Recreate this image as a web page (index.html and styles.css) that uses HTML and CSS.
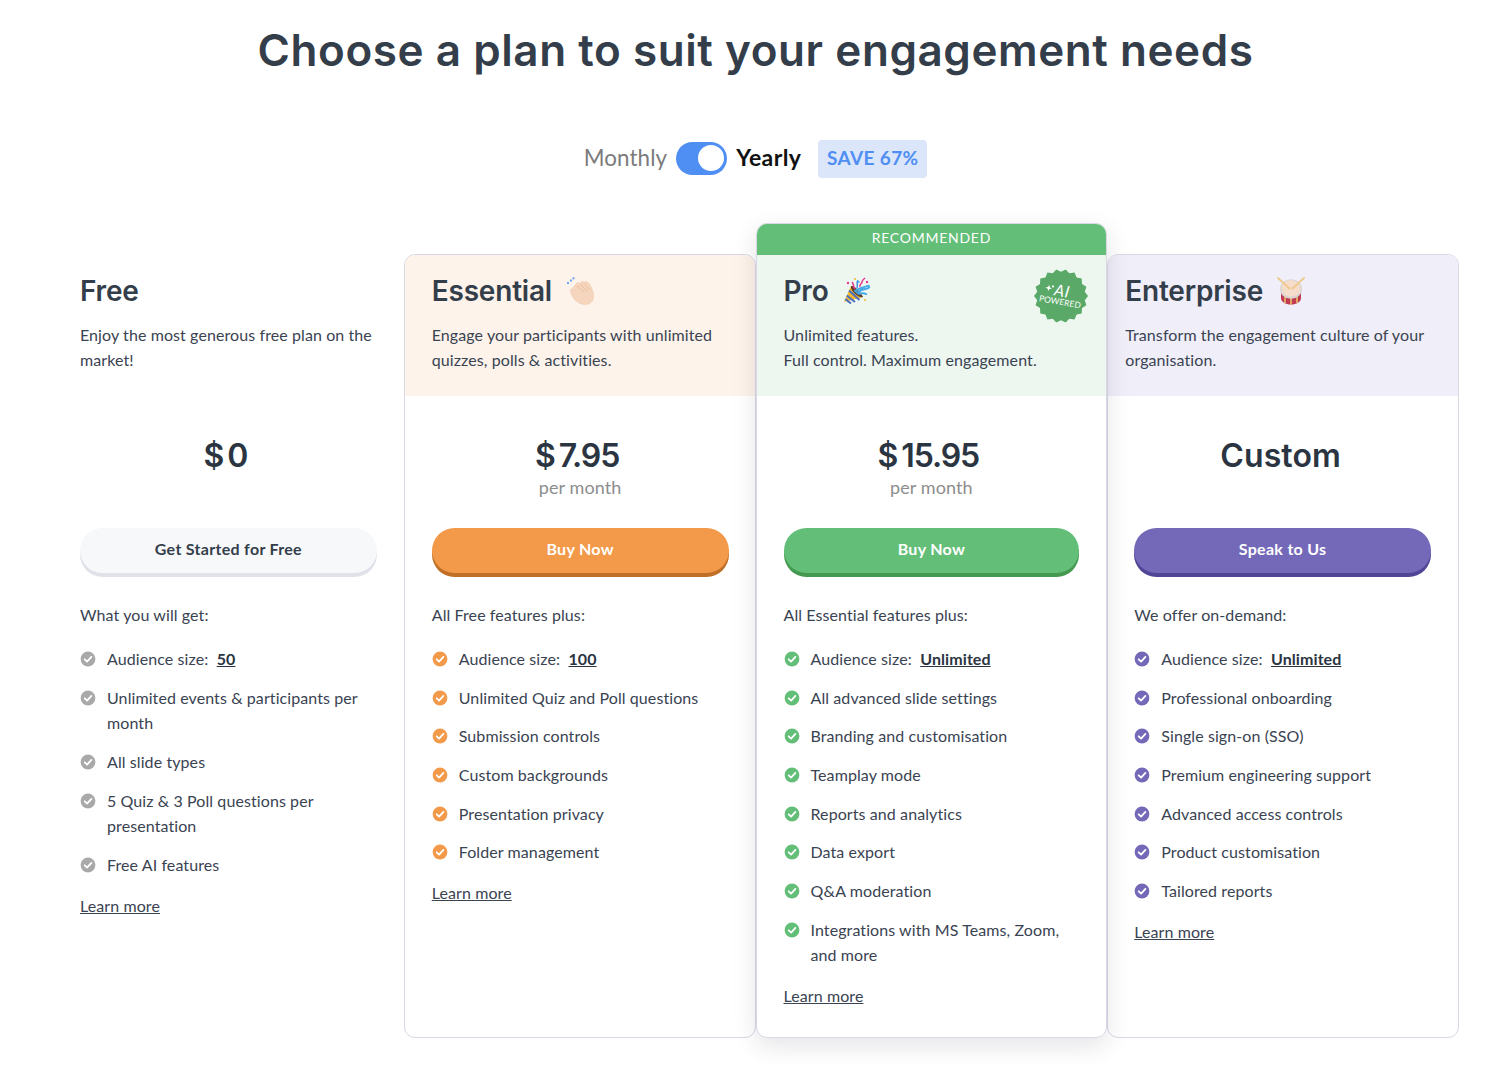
FILE: index.html
```html
<!DOCTYPE html>
<html lang="en">
<head>
<meta charset="utf-8">
<title>Pricing</title>
<link rel="stylesheet" href="styles.css">
</head>
<body>
<svg class="defs" width="0" height="0" aria-hidden="true">
  <symbol id="chk" viewBox="0 0 16 16">
    <circle cx="8" cy="8" r="7.4" fill="currentColor"/>
    <path d="M4.7 8.3 7.1 10.6 11.4 5.9" fill="none" stroke="#fff" stroke-width="1.8" stroke-linecap="round" stroke-linejoin="round"/>
  </symbol>
</svg>
<main class="page">
  <h1 class="title">Choose a plan to suit your engagement needs</h1>
  <div class="billing">
    <span class="billing-off">Monthly</span>
    <span class="switch"><span class="knob"></span></span>
    <span class="billing-on">Yearly</span>
    <span class="save">SAVE 67%</span>
  </div>
  <section class="plans">
    <article class="plan plan-free">
      <header class="plan-head">
        <h2 class="plan-name">Free</h2>
        <p class="plan-desc">Enjoy the most generous free plan on the market!</p>
      </header>
      <div class="plan-body">
        <div class="price-box"><div class="price price-num"><span class="cur">$</span>0</div></div>
        <a class="btn">Get Started for Free</a>
        <p class="lead">What you will get:</p>
        <ul class="features">
          <li><svg class="tick"><use href="#chk"/></svg><span>Audience size:&nbsp; <b>50</b></span></li>
          <li><svg class="tick"><use href="#chk"/></svg><span>Unlimited events &amp; participants per month</span></li>
          <li><svg class="tick"><use href="#chk"/></svg><span>All slide types</span></li>
          <li><svg class="tick"><use href="#chk"/></svg><span>5 Quiz &amp; 3 Poll questions per presentation</span></li>
          <li><svg class="tick"><use href="#chk"/></svg><span>Free AI features</span></li>
        </ul>
        <a class="more">Learn more</a>
      </div>
    </article>

    <article class="plan plan-essential">
      <header class="plan-head">
        <h2 class="plan-name">Essential
          <svg class="emoji" viewBox="0 0 28 28">
            <g fill="#f5d5bd" stroke="#eec4a6" stroke-width=".5">
              <path d="M5 13 11 6c1-1 3 0 2.400 1.500L15 5c1-1.500 3-.5 2.700 1L19 4.800c1.300-1 3 0 2.600 1.500 1.500-.5 2.600.5 2.500 2 2 3 3.900 8 3.500 12-.4 4.500-4 7.200-8.500 7.200-3.600 0-6.500-1.500-9-3.500-2.600-2.500-5-6.500-5.500-9.500-.4-1.300.3-2 .4-2.500z"/>
              <path d="M11 9 18 15M14.500 7.500 21 14M18 6.500 23.500 13" fill="none" stroke="#e9bd9c" stroke-width=".9"/>
            </g>
            <g fill="#6aa5ef"><rect x="1" y="5" width="2" height="2"/><rect x="4" y="2.500" width="2" height="2"/><rect x="6.500" y=".3" width="2" height="2"/></g>
          </svg>
        </h2>
        <p class="plan-desc">Engage your participants with unlimited quizzes, polls &amp; activities.</p>
      </header>
      <div class="plan-body">
        <div class="price-box"><div class="price price-num"><span class="cur">$</span>7.95</div><div class="per">per month</div></div>
        <a class="btn">Buy Now</a>
        <p class="lead">All Free features plus:</p>
        <ul class="features">
          <li><svg class="tick"><use href="#chk"/></svg><span>Audience size:&nbsp; <b>100</b></span></li>
          <li><svg class="tick"><use href="#chk"/></svg><span>Unlimited Quiz and Poll questions</span></li>
          <li><svg class="tick"><use href="#chk"/></svg><span>Submission controls</span></li>
          <li><svg class="tick"><use href="#chk"/></svg><span>Custom backgrounds</span></li>
          <li><svg class="tick"><use href="#chk"/></svg><span>Presentation privacy</span></li>
          <li><svg class="tick"><use href="#chk"/></svg><span>Folder management</span></li>
        </ul>
        <a class="more">Learn more</a>
      </div>
    </article>

    <article class="plan plan-pro">
      <div class="banner">RECOMMENDED</div>
      <header class="plan-head">
        <h2 class="plan-name">Pro
          <svg class="emoji" viewBox="0 0 28 28">
            <path d="M1 25 8 9 20 20z" fill="#f2b632"/>
            <path d="M3.800 18.500 12 25M2.300 22 8 26.500M6 13.500 16.500 23" stroke="#4a6fc0" stroke-width="2.100" fill="none"/>
            <path d="M8 9c3-1 9 5 12 11-4 1.500-13-6-12-11z" fill="#5d3d28"/>
            <path d="M12 14c3-3 8-3 12-5 2-1 3 1 1.500 2-4 1.500-8 1-11 5zM15 17c3-1 6-1 9 .5" fill="none" stroke="#45a9e8" stroke-width="1.900"/>
            <path d="M12 12c-2-2-1-5-3-7M17 10c-1-3 2-3 2-5s2-3 3-4" fill="none" stroke="#e5398f" stroke-width="1.500"/>
            <path d="M14 11c1-3-.5-5 .5-7l2 1.500" fill="none" stroke="#3f8fe0" stroke-width="1.500"/>
            <circle cx="5" cy="6" r="1.200" fill="#e5398f"/><circle cx="12" cy="2" r="1" fill="#f2b632"/><circle cx="24" cy="5" r="1.200" fill="#e5398f"/><circle cx="22" cy="23" r="1" fill="#f2b632"/>
          </svg>
        </h2>
        <p class="plan-desc">Unlimited features.<br>Full control. Maximum engagement.</p>
        <svg class="ai-badge" viewBox="-28 -28 56 56" role="img" aria-label="AI powered">
          <polygon fill="#5aa968" points="27,0 23.800,4.200 25.400,9.200 21,12.100 20.700,17.400 15.600,18.500 13.500,23.400 8.300,22.700 4.700,26.600 0,24.200 -4.700,26.600 -8.300,22.700 -13.500,23.400 -15.600,18.500 -20.700,17.400 -21,12.100 -25.400,9.200 -23.800,4.200 -27,0 -23.800,-4.200 -25.400,-9.200 -21,-12.100 -20.700,-17.400 -15.600,-18.500 -13.500,-23.400 -8.300,-22.700 -4.700,-26.600 0,-24.200 4.700,-26.600 8.300,-22.700 13.500,-23.400 15.600,-18.500 20.700,-17.400 21,-12.100 25.400,-9.200 23.800,-4.200"/>
          <g transform="rotate(10)" fill="#fff">
            <path d="M-13.500 -9-12.600-6.700-10.300-5.800-12.600-4.900-13.500-2.600-14.400-4.900-16.700-5.800-14.400-6.700z"/>
            <circle cx="-9.500" cy="-8" r="1.100"/>
            <text class="ai-big" x="-7.500" y="0.500">AI</text>
            <text class="ai-small" x="0" y="8.800" text-anchor="middle">POWERED</text>
          </g>
        </svg>
      </header>
      <div class="plan-body">
        <div class="price-box"><div class="price price-num"><span class="cur">$</span>15.95</div><div class="per">per month</div></div>
        <a class="btn">Buy Now</a>
        <p class="lead">All Essential features plus:</p>
        <ul class="features">
          <li><svg class="tick"><use href="#chk"/></svg><span>Audience size:&nbsp; <b>Unlimited</b></span></li>
          <li><svg class="tick"><use href="#chk"/></svg><span>All advanced slide settings</span></li>
          <li><svg class="tick"><use href="#chk"/></svg><span>Branding and customisation</span></li>
          <li><svg class="tick"><use href="#chk"/></svg><span>Teamplay mode</span></li>
          <li><svg class="tick"><use href="#chk"/></svg><span>Reports and analytics</span></li>
          <li><svg class="tick"><use href="#chk"/></svg><span>Data export</span></li>
          <li><svg class="tick"><use href="#chk"/></svg><span>Q&amp;A moderation</span></li>
          <li><svg class="tick"><use href="#chk"/></svg><span>Integrations with MS Teams, Zoom, and more</span></li>
        </ul>
        <a class="more">Learn more</a>
      </div>
    </article>

    <article class="plan plan-enterprise">
      <header class="plan-head">
        <h2 class="plan-name">Enterprise
          <svg class="emoji" viewBox="0 0 28 28">
            <path d="M4 12v9c0 4 4.500 6.500 10 6.500s10-2.500 10-6.500v-9z" fill="#c23a52"/>
            <path d="M8 19v7M14 21v6.500M20 19v7" stroke="#e8c06a" stroke-width="1.600"/>
            <ellipse cx="14" cy="12" rx="11" ry="9.800" fill="#d8d4d2"/>
            <ellipse cx="14" cy="11.500" rx="9.600" ry="8.200" fill="#f6dccb"/>
            <path d="M1 1 12.500 11.500M27 1 15.500 11.500" stroke="#eec98a" stroke-width="1.800" stroke-linecap="round"/>
          </svg>
        </h2>
        <p class="plan-desc">Transform the engagement culture of your organisation.</p>
      </header>
      <div class="plan-body">
        <div class="price-box"><div class="price">Custom</div></div>
        <a class="btn">Speak to Us</a>
        <p class="lead">We offer on-demand:</p>
        <ul class="features">
          <li><svg class="tick"><use href="#chk"/></svg><span>Audience size:&nbsp; <b>Unlimited</b></span></li>
          <li><svg class="tick"><use href="#chk"/></svg><span>Professional onboarding</span></li>
          <li><svg class="tick"><use href="#chk"/></svg><span>Single sign-on (SSO)</span></li>
          <li><svg class="tick"><use href="#chk"/></svg><span>Premium engineering support</span></li>
          <li><svg class="tick"><use href="#chk"/></svg><span>Advanced access controls</span></li>
          <li><svg class="tick"><use href="#chk"/></svg><span>Product customisation</span></li>
          <li><svg class="tick"><use href="#chk"/></svg><span>Tailored reports</span></li>
        </ul>
        <a class="more">Learn more</a>
      </div>
    </article>
  </section>
</main>
</body>
</html>
```
FILE: styles.css
```css
* { box-sizing: border-box; }
html, body { margin: 0; padding: 0; background: #fff; }
body { font-family: "Lato", "Liberation Sans", sans-serif; color: #3a4352; font-size: 16px; letter-spacing: .09px; }
.defs { position: absolute; }
.page { padding: 20px 42px 26px 52px; }
.title { margin: 0; text-align: center; height: 60px; line-height: 60px; font-family: "Inter", sans-serif; font-weight: 600; font-size: 44px; letter-spacing: .57px; color: #343e4a; }

.billing { display: flex; align-items: center; justify-content: center; margin-top: 59px; height: 38px; }
.billing-off { font-size: 22.4px; color: #7b7b7b; padding-bottom: 2px; }
.switch { width: 51px; height: 33px; margin-left: 9px; border-radius: 17px; background: #4f8ef3; display: flex; align-items: center; justify-content: flex-end; padding-right: 3px; }
.knob { width: 26px; height: 26px; border-radius: 50%; background: #fff; }
.billing-on { margin-left: 9px; font-size: 23px; font-weight: 700; letter-spacing: .4px; color: #111; padding-bottom: 2px; }
.save { margin: 2px 0 0 17px; width: 109px; height: 38px; line-height: 36px; text-align: center; background: #dbe6fb; color: #4f8ef3; font-size: 19px; font-weight: 700; letter-spacing: .35px; border-radius: 4px; }

.plans { display: grid; grid-template-columns: repeat(4, 1fr); margin-top: 77px; height: 784px; }
.plan { border: 1px solid #d9d8e4; border-radius: 11px; background: #fff; position: relative; min-width: 0; overflow: hidden; }
.plan-free { border-color: transparent; }
.plan-pro { margin-top: -31px; z-index: 1; box-shadow: 0 8px 24px rgba(30, 30, 60, .12); }
.plan-head { position: relative; height: 141px; padding: 18px 27px 0; }
.plan-essential .plan-head { background: #fdf3ea; }
.plan-pro .plan-head { background: #edf7f0; }
.plan-enterprise .plan-head { background: #f0eef8; padding-left: 17px; padding-right: 18px; }
.plan-name { margin: 0; display: flex; align-items: center; gap: 14px; height: 36px; font-family: "Inter", sans-serif; font-weight: 600; font-size: 28px; letter-spacing: -.2px; color: #343e4a; }
.emoji { width: 28px; height: 28px; flex: none; }
.plan-desc { margin: 13px 0 0; line-height: 25px; font-size: 16px; color: #3a4352; }
.ai-badge { position: absolute; top: 13px; right: 17px; width: 56px; height: 56px; }
.ai-big { font-size: 16px; font-weight: 400; font-style: italic; font-family: "Lato", sans-serif; letter-spacing: .5px; }
.ai-small { font-size: 8.4px; font-family: "Lato", sans-serif; }
.banner { height: 32px; line-height: 30px; text-align: center; background: #63be78; color: #fff; font-size: 14px; letter-spacing: .75px; margin: -1px -1px 0; }

.plan-body { padding: 0 26px 0 27px; }
.plan-enterprise .plan-body { padding: 0 27px 0 26px; }
.plan-pro .plan-body { padding-right: 27px; }
.price-box { height: 132px; padding-top: 38px; text-align: center; }
.price { height: 44px; line-height: 44px; font-family: "Inter", sans-serif; font-weight: 600; font-size: 32px; color: #2b3441; padding-right: 4px; }
.price-num { letter-spacing: -1.1px; padding-right: 6px; }
.cur { margin-right: 4px; }
.per { line-height: 26px; margin-top: -4px; font-size: 18px; color: #8d8d8d; }
.btn { display: block; height: 45px; line-height: 42px; text-align: center; border-radius: 23px; font-weight: 700; font-size: 16px; letter-spacing: .3px; color: #fff; }
.plan-free .btn { background: #f7f8fa; color: #343e4a; box-shadow: 0 4px 0 #e1e1ea; }
.plan-essential .btn { background: #f2994a; box-shadow: 0 4px 0 #bf6f26; }
.plan-pro .btn { background: #63be78; box-shadow: 0 4px 0 #45984f; }
.plan-enterprise .btn { background: #7469b8; box-shadow: 0 4px 0 #4f4495; }
.lead { margin: 29px 0 0; line-height: 26px; }
.features { list-style: none; margin: 18px 0 0; padding: 0; }
.features li { display: flex; align-items: flex-start; gap: 11px; line-height: 25.6px; margin-bottom: 13.08px; }
.tick { width: 16px; height: 16px; flex: none; margin-top: 5px; }
.plan-free .tick { color: #a9a9a9; }
.plan-essential .tick { color: #f2994a; }
.plan-pro .tick { color: #63be78; }
.plan-enterprise .tick { color: #7469b8; }
.features b { font-weight: 700; color: #2b3441; text-decoration: underline; }
.more { display: block; width: max-content; margin-top: 15.5px; line-height: 26px; color: #3a4352; text-decoration: underline; }
```
